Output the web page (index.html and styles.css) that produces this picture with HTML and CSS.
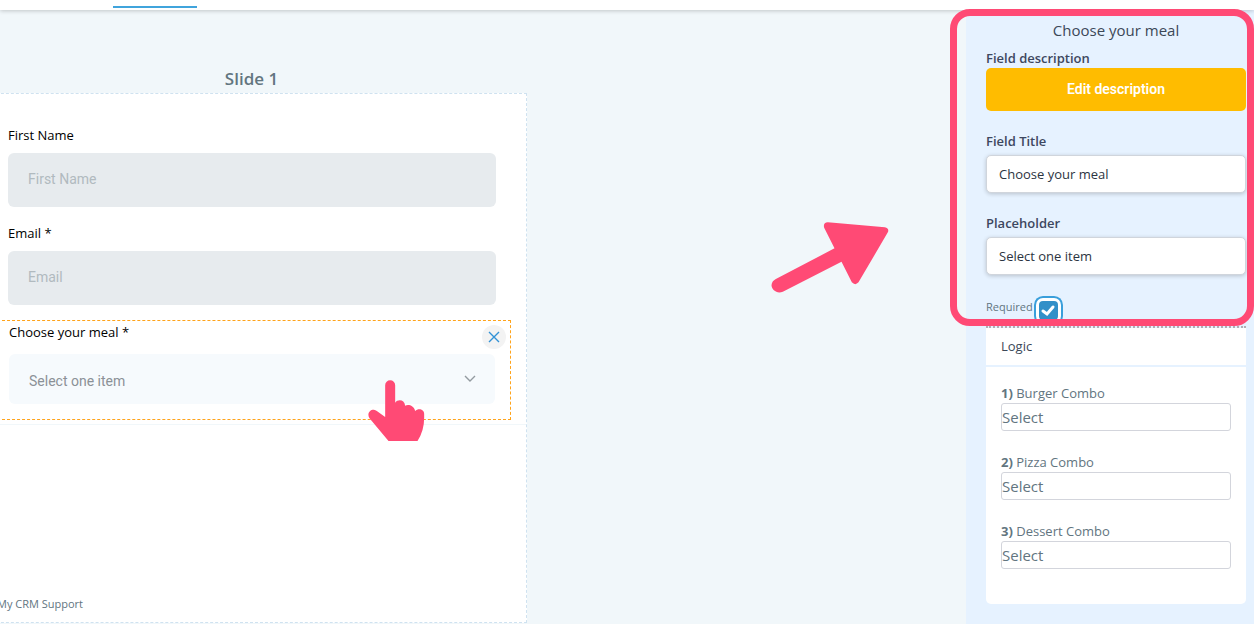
FILE: index.html
```html
<!DOCTYPE html>
<html lang="en">
<head>
  <meta charset="UTF-8" />
  <meta name="viewport" content="width=device-width, initial-scale=1" />
  <title>Form Builder</title>
  <link rel="stylesheet" href="styles.css">
</head>
<body>
  <header class="top-bar">
    <div class="active-tab"></div>
  </header>

  <div class="builder">
    <main class="canvas">
      <h2 class="slide-title">Slide 1</h2>
      <form class="slide">
        <div class="field">
          <label for="first-name">First Name</label>
          <input id="first-name" type="text" placeholder="First Name" />
        </div>
        <div class="field">
          <label for="email">Email *</label>
          <input id="email" type="text" placeholder="Email" />
        </div>
        <div class="field selected">
          <label for="meal">Choose your meal *</label>
          <div class="select-box">
            <select id="meal">
              <option>Select one item</option>
            </select>
            <svg class="chevron" viewBox="0 0 12 8" width="12" height="8"><path d="M1 1l5 5 5-5" /></svg>
          </div>
          <button class="remove-btn" type="button" aria-label="Remove field">
            <svg viewBox="0 0 12 12" width="12" height="12"><path d="M1 1l10 10M11 1L1 11" /></svg>
          </button>
          <svg class="hand" viewBox="84 240 170 183" width="57" height="61">
            <path d="M145 423L88 355C79 340 90 328 101 329Q106 330 110 333L135 351V256A15 15 0 0 1 165 256V308C174 296 193 299 195 317C203 312 221 315 225 333C234 324 252 327 252 342V354Q252 392 232 423Z" />
          </svg>
        </div>
        <div class="slide-footer">My CRM Support</div>
      </form>
      <svg class="arrow" viewBox="62 65 353 213" width="118" height="71">
        <path d="M76 236L252 144L221 82Q217 67 232 66L403 81Q417 84 412 96L324 246Q314 257 304 246L273 184L97 274C80 281 64 270 63 255Q64 242 76 236Z" />
      </svg>
    </main>

    <aside class="sidebar">
      <section class="settings">
        <h3 class="settings-title">Choose your meal</h3>
        <div class="setting">
          <span class="setting-label">Field description</span>
          <button class="edit-btn" type="button">Edit description</button>
        </div>
        <div class="setting">
          <label class="setting-label" for="field-title">Field Title</label>
          <input class="setting-input" id="field-title" type="text" value="Choose your meal" />
        </div>
        <div class="setting">
          <label class="setting-label" for="placeholder">Placeholder</label>
          <input class="setting-input" id="placeholder" type="text" value="Select one item" />
        </div>
        <label class="required">
          <span>Required</span>
          <span class="check-box">
            <input type="checkbox" checked />
            <svg viewBox="0 0 19 19" width="19" height="19"><path d="M4 10l4 3 6-7" /></svg>
          </span>
        </label>
      </section>

      <section class="logic">
        <h4 class="logic-title">Logic</h4>
        <div class="logic-list">
          <div class="logic-item">
            <label for="logic-1"><b>1)</b> Burger Combo</label>
            <select id="logic-1"><option>Select</option></select>
          </div>
          <div class="logic-item">
            <label for="logic-2"><b>2)</b> Pizza Combo</label>
            <select id="logic-2"><option>Select</option></select>
          </div>
          <div class="logic-item">
            <label for="logic-3"><b>3)</b> Dessert Combo</label>
            <select id="logic-3"><option>Select</option></select>
          </div>
        </div>
      </section>
    </aside>
  </div>
</body>
</html>
```
FILE: styles.css
```css
* {
  box-sizing: border-box;
}

body {
  margin: 0;
  min-height: 100vh;
  display: flex;
  flex-direction: column;
  overflow: hidden;
  font-family: 'Segoe UI', 'Open Sans', 'Noto Sans', sans-serif;
  font-size: 13px;
  color: #62757f;
  background: #f1f7fa;
}

h2, h3, h4 {
  margin: 0;
}

input, select, button {
  margin: 0;
  appearance: none;
  font-family: inherit;
}

.top-bar {
  height: 10px;
  padding: 6px 0 0 113px;
  background: #fff;
  box-shadow: 0 1px 4px rgba(0, 0, 0, 0.2);
  position: relative;
}

.active-tab {
  width: 84px;
  height: 2px;
  background: #40a4dc;
}

.builder {
  flex: 1;
  display: flex;
}

/* canvas */
.canvas {
  flex: 1;
  position: relative;
  margin-left: -24px;
  padding-top: 56px;
}

.slide-title {
  width: 551px;
  margin-bottom: 1px;
  line-height: 26px;
  font-size: 17px;
  font-weight: 600;
  text-align: center;
}

.slide {
  display: flex;
  flex-direction: column;
  width: 551px;
  min-height: 530px;
  padding-top: 32px;
  background: #fff;
  border: 1px dashed #cfe2f0;
}

.field {
  display: flex;
  flex-direction: column;
  gap: 9px;
  margin: 0 30px 17px 31px;
  color: #000;
}

.field label {
  line-height: 18px;
}

.field input {
  height: 54px;
  padding: 0 20px 2px;
  border: none;
  border-radius: 6px;
  background: #e7ebee;
  font-family: Roboto, sans-serif;
  font-size: 14px;
}

.field input::placeholder {
  color: #b1babf;
}

.field.selected {
  position: relative;
  gap: 13px;
  margin: -2px 15px 4px;
  padding: 2px 15px 15px 16px;
  border: 1px dashed #ffa31a;
}

.select-box {
  display: flex;
  align-items: center;
  padding-right: 19px;
  border-radius: 6px;
  background: #f6fafd;
}

.select-box select {
  flex: 1;
  height: 50px;
  padding: 4px 20px 0;
  border: none;
  background: none;
  font-family: Roboto, sans-serif;
  font-size: 14px;
  color: #8b9197;
}

svg {
  fill: none;
  stroke-width: 1;
}

.chevron {
  stroke: #939ba0;
  stroke-width: 1.4;
}

.remove-btn {
  position: absolute;
  top: 4px;
  right: 4px;
  width: 24px;
  height: 24px;
  padding: 0;
  display: flex;
  align-items: center;
  justify-content: center;
  border: none;
  border-radius: 50%;
  background: #f3f3f3;
  stroke: #3292d6;
}

.remove-btn svg {
  stroke-width: 1.4;
}

.hand {
  position: absolute;
  right: 85px;
  bottom: -22px;
  fill: #ff4a75;
}

.arrow {
  position: absolute;
  top: 212px;
  right: 77px;
  fill: #ff4a75;
}

.slide-footer {
  flex: 1;
  display: flex;
  align-items: flex-end;
  padding: 0 20px 10px;
  border-top: 1px solid #f1f7fa;
  font-size: 11px;
  line-height: 16px;
}

/* sidebar */
.sidebar {
  width: 288px;
  padding: 0 8px 20px 20px;
  background: #e6f2ff;
}

.settings {
  position: relative;
  padding-top: 8px;
}

/* highlight frame around the settings */
.settings::after {
  content: "";
  position: absolute;
  inset: -1px -8px 0 -36px;
  border: 7px solid #ff4a75;
  border-radius: 20px;
  pointer-events: none;
}

.settings-title {
  margin-bottom: 7px;
  line-height: 24px;
  font-size: 15px;
  font-weight: 400;
  text-align: center;
  color: #3c4858;
}

.setting {
  display: flex;
  flex-direction: column;
  margin-bottom: 21px;
}

.setting-label {
  line-height: 18px;
  font-size: 13px;
  font-weight: 600;
  color: #3d4760;
}

.edit-btn {
  height: 43px;
  margin-top: 1px;
  padding: 0 6px 2px;
  border: none;
  border-radius: 5px;
  background: #ffbc00;
  color: #fff;
  font-family: Roboto, sans-serif;
  font-size: 14px;
  font-weight: 600;
}

.setting-input {
  height: 38px;
  margin-top: 5px;
  padding: 0 12px;
  border: 1px solid #d0d5dc;
  border-radius: 5px;
  background: #fff;
  box-shadow: 0 1px 4px rgba(0, 0, 0, 0.2);
  font-size: 13px;
  color: #2c3442;
}

.required {
  display: flex;
  gap: 6px;
  height: 30px;
  font-size: 11px;
  line-height: 22px;
}

.check-box {
  position: relative;
  margin-top: 5px;
}

.check-box input {
  display: block;
  width: 19px;
  height: 19px;
  border-radius: 4px;
  background: #3290c8;
  box-shadow: 0 0 0 3px #fff, 0 0 0 5px #3a9fdb;
}

.check-box svg {
  position: absolute;
  inset: 0;
  stroke: #fff;
  stroke-width: 3;
  stroke-linecap: round;
}

.logic {
  border-top: 2px dotted #b3adb3;
}

.logic-title {
  padding: 8px 15px;
  border-bottom: 2px solid #e6f2ff;
  background: #fff;
  line-height: 21px;
  font-size: 13px;
  font-weight: 400;
  color: #3c4858;
}

.logic-list {
  display: flex;
  flex-direction: column;
  gap: 21px;
  padding: 16px 15px 35px;
  border-radius: 0 0 5px 5px;
  background: #fff;
}

.logic-item {
  display: flex;
  flex-direction: column;
}

.logic-item label {
  font-size: 13px;
  line-height: 20px;
}

.logic-item select {
  height: 28px;
  padding: 0;
  border: 1px solid #d3d5dc;
  border-radius: 3px;
  background: #fff;
  font-size: 15px;
  color: #62757f;
}
```
